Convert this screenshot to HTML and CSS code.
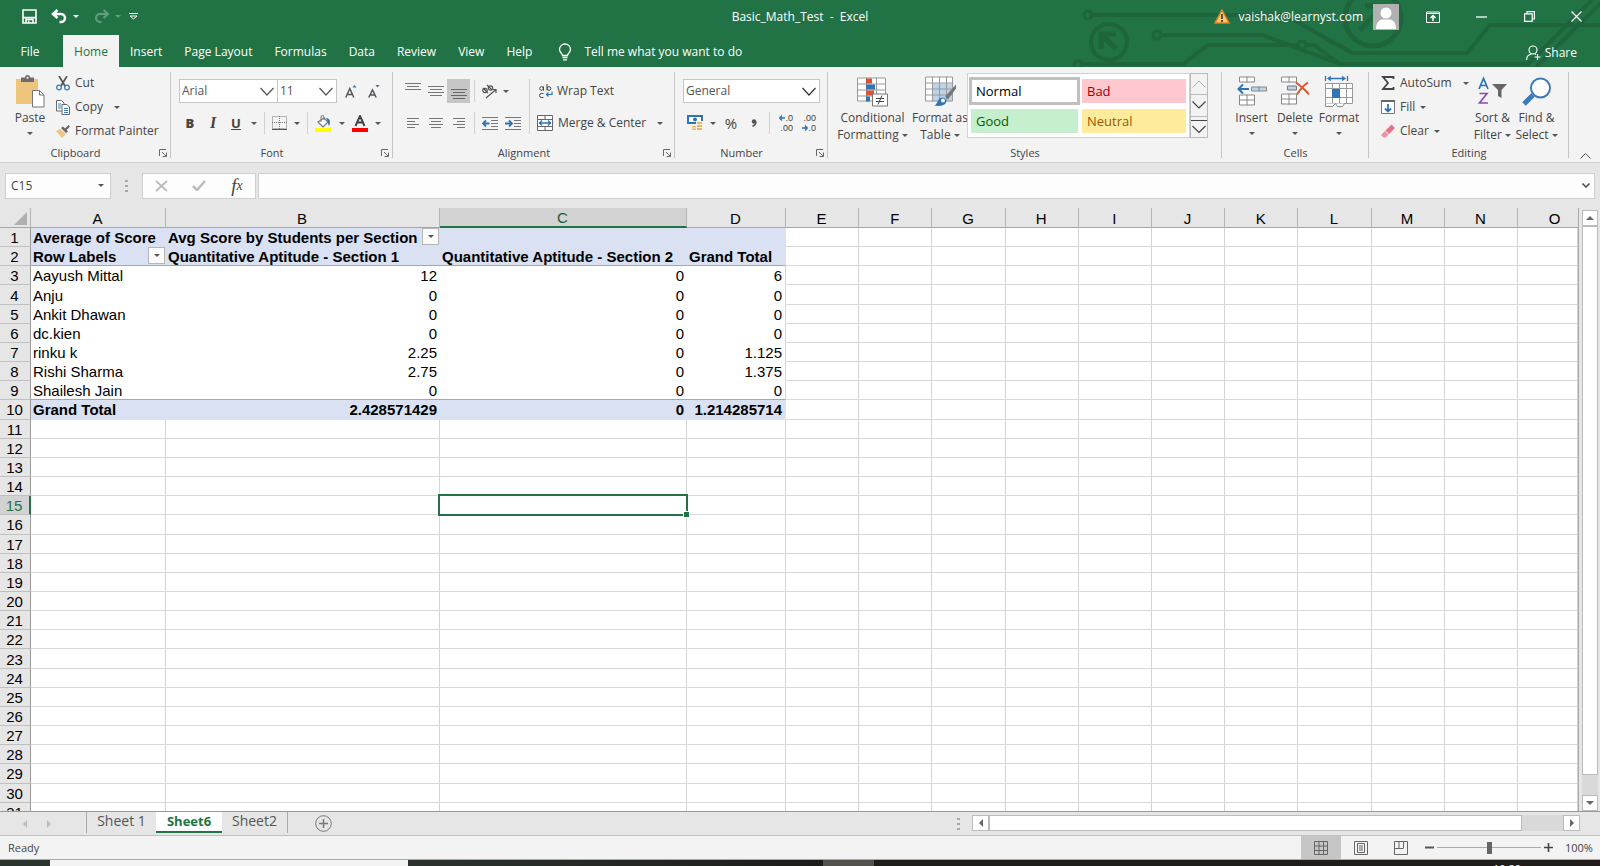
FILE: index.html
```html
<!DOCTYPE html>
<html lang="en">
<head>
<meta charset="utf-8">
<title>Basic_Math_Test - Excel</title>
<link rel="stylesheet" href="styles.css">
</head>
<body>
<header class="top">
  <svg class="circuit" width="530" height="67" viewBox="1070 0 530 67" fill="none" stroke="#1e643c" stroke-width="4" aria-hidden="true">
    <circle cx="1088" cy="15" r="4" stroke-width="3"/><path d="M1093 15H1285L1352 53H1467L1490 25H1600"/>
    <circle cx="1109" cy="42" r="18"/><path d="M1101 49V34H1116M1102 35L1116 49" stroke-width="5"/>
    <circle cx="1157" cy="35" r="4" stroke-width="3"/><path d="M1162 35H1262L1340 64H1528L1592 0"/>
    <circle cx="1078" cy="65" r="4" stroke-width="3"/><path d="M1083 64H1183L1208 45H1297M1307 45H1314L1340 64"/>
    <circle cx="1302" cy="45" r="4" stroke-width="3"/>
    <circle cx="1373" cy="18" r="28" stroke-width="5"/><path d="M1360 30L1382 8M1365 6H1384V24" stroke-width="5"/>
    <path d="M1536 67L1604 0"/>
  </svg>
  <div class="titlebar">
    <div class="qat">
      <button class="tb" aria-label="Save"><svg width="15" height="15" viewBox="0 0 15 15"><path d="M1 1h13v13H1z" fill="none" stroke="#fff" stroke-width="1.6"/><path d="M1 8.600h13M4 14v-3.500h7V14" fill="none" stroke="#fff" stroke-width="1.600"/><path d="M6 11.500h1.500V14H6z" fill="#fff"/></svg></button>
      <button class="tb undo" aria-label="Undo"><svg width="17" height="15" viewBox="0 0 17 15"><path d="M2 5h8a4 4 0 0 1 0 8H8.500M6.500 1L2 5l4.500 4" fill="none" stroke="#fff" stroke-width="2.500"/></svg><i class="caret"></i></button>
      <button class="tb redo" aria-label="Redo"><svg width="17" height="15" viewBox="0 0 17 15"><path d="M15 5H7a4 4 0 0 0 0 8h1.500M10.500 1L15 5l-4.500 4" fill="none" stroke="#fff" stroke-width="2"/></svg><i class="caret"></i></button>
      <button class="tb custom" aria-label="Customize toolbar"><svg width="9" height="7" viewBox="0 0 9 7"><path d="M0 .5h9M1 3h7L4.500 6z" fill="none" stroke="#fff"/></svg></button>
    </div>
    <div class="doc">Basic_Math_Test&nbsp; -&nbsp; Excel</div>
    <div class="account">
      <svg class="warn" width="16" height="15" viewBox="0 0 16 15"><path d="M8 1L15 14H1z" fill="#f9c877" stroke="#e0801c" stroke-width="1.500"/><path d="M8 5v5M8 11v2" stroke="#333" stroke-width="1.600"/></svg>
      <span class="mail">vaishak@learnyst.com</span>
      <svg class="avatar" width="26" height="26" viewBox="0 0 26 26"><path d="M0 0h26v26H0z" fill="#b1b1b1"/><circle cx="13" cy="9" r="5.500" fill="#fff"/><path d="M3 25c0-6 3-9.500 6-9.500h8c3 0 6 3.500 6 9.500z" fill="#fff"/></svg>
      <button class="win" aria-label="Ribbon display options"><svg width="14" height="12" viewBox="0 0 14 12" fill="none" stroke="#fff"><path d="M.5 1h13v10.500H.5zM.5 2.500h13"/><path d="M7 10V5M4.500 7L7 4.500 9.500 7" stroke-width="1.500"/></svg></button>
      <button class="win" aria-label="Minimize"><svg width="11" height="11" viewBox="0 0 11 11"><path d="M0 6h11" stroke="#fff" stroke-width="1.300"/></svg></button>
      <button class="win" aria-label="Restore"><svg width="11" height="11" viewBox="0 0 11 11" fill="none" stroke="#fff" stroke-width="1.200"><path d="M.6 2.800h7.600v7.600H.6zM3 2.500V.6h7.400V8H8.500"/></svg></button>
      <button class="win" aria-label="Close"><svg width="11" height="11" viewBox="0 0 11 11"><path d="M.5.5l10 10M10.500.5l-10 10" stroke="#fff" stroke-width="1.300"/></svg></button>
    </div>
  </div>
  <nav class="tabs">
    <button class="tab file">File</button><button class="tab active">Home</button><button class="tab">Insert</button><button class="tab">Page Layout</button><button class="tab">Formulas</button><button class="tab">Data</button><button class="tab">Review</button><button class="tab">View</button><button class="tab">Help</button>
    <button class="tell"><svg width="14" height="18" viewBox="0 0 14 18" fill="none" stroke="#fff" stroke-width="1.300"><path d="M4.500 12.500c0-2-3-3-3-6a5.500 5.500 0 0 1 11 0c0 3-3 4-3 6zM4.500 14.500h5M5 16.800h4"/></svg>Tell me what you want to do</button>
    <button class="share"><svg width="15" height="16" viewBox="0 0 15 16" fill="none" stroke="#fff" stroke-width="1.100"><circle cx="7" cy="5" r="4"/><path d="M.6 15c0-3 2-5.500 5-6M9 9l1 .5M11.500 9v6M8.500 12h6"/></svg>Share</button>
  </nav>
</header>

<section class="ribbon">
  <div class="group clipboard">
    <div class="body">
      <button class="big paste"><svg width="30" height="33" viewBox="0 0 30 33"><path d="M1 4h22v25H1z" fill="#edc57d"/><path d="M6 2.500h4a2.500 2.500 0 0 1 5 0h4V7H6z" fill="#6d6d6d"/><circle cx="12.500" cy="2.800" r="1" fill="#fff"/><path d="M17.500 15.500h7l4.500 4.500v12H17.500z" fill="#fff" stroke="#777"/><path d="M24.500 15.500V20H29" fill="none" stroke="#777"/></svg><span>Paste</span><i class="caret"></i></button>
      <div class="stack">
        <button class="sm"><svg width="14" height="15" viewBox="0 0 14 15" fill="none"><path d="M3 0l6 10M11 0L5 10" stroke="#555" stroke-width="1.700"/><circle cx="3" cy="11.500" r="2.300" stroke="#3d7ab8" stroke-width="1.300"/><circle cx="11" cy="11.500" r="2.300" stroke="#3d7ab8" stroke-width="1.300"/></svg>Cut</button>
        <button class="sm"><svg width="14" height="15" viewBox="0 0 14 15" fill="#fff" stroke="#666"><path d="M.5.5h5L8 3v8H.5z"/><path d="M6 4.500h5L13.500 7v7.500H6z"/><path d="M2 4h3M2 6h3M2 8h3M8 8.500h4M8 10.500h4M8 12.500h4" stroke="#3d7ab8"/></svg>Copy<i class="caret far"></i></button>
        <button class="sm"><svg width="14" height="13" viewBox="0 0 14 13"><path d="M0 6l4-2 6 5-4 4z" fill="#edc57d"/><path d="M5 3l5 5 2-1.500L10.500 5 14 1.500 12.500 0 9 3.500 7 1.500z" fill="#666"/></svg>Format Painter</button>
      </div>
    </div>
    <div class="label">Clipboard<svg class="launch" width="8" height="8" viewBox="0 0 8 8"><path d="M.5 7V.5H7M3 3l4 4M7.500 3.500v4h-4" fill="none" stroke="#666"/></svg></div>
  </div>

  <div class="group font">
    <div class="body rows">
      <div class="row">
        <div class="combo fname"><select aria-label="Font"><option>Arial</option></select><svg width="14" height="9" viewBox="0 0 14 9"><path d="M.5 1L7 8l6.500-7" fill="none" stroke="#555" stroke-width="1.200"/></svg></div>
        <div class="combo fsize"><select aria-label="Font size"><option>11</option></select><svg width="14" height="9" viewBox="0 0 14 9"><path d="M.5 1L7 8l6.500-7" fill="none" stroke="#555" stroke-width="1.200"/></svg></div>
        <button class="ic grow" aria-label="Increase font size"><svg width="12" height="13" viewBox="0 0 12 13"><path d="M.8 12.500L4.800 3.500l4 9M2.300 9.500h5" fill="none" stroke="#555" stroke-width="1.500"/><path d="M7.500 2.500h4L9.500 0z" fill="#2e75b6"/></svg></button>
        <button class="ic" aria-label="Decrease font size"><svg width="12" height="13" viewBox="0 0 12 13"><path d="M.8 12.500L4.500 5l3.700 7.500M2.300 10h4.500" fill="none" stroke="#555" stroke-width="1.500"/><path d="M7.500 0h4l-2 2.500z" fill="#2e75b6"/></svg></button>
      </div>
      <div class="row second">
        <button class="ic biu"><b>B</b></button><button class="ic biu it">I</button><button class="ic biu un">U</button><i class="caret"></i>
        <i class="sep"></i>
        <button class="ic" aria-label="Borders"><svg width="15" height="14" viewBox="0 0 15 14" fill="none" stroke="#777"><path d="M.5.5h14v12H.5zM7.500 0v13M0 6.500h15" stroke-dasharray="1 1"/><path d="M0 13.500h15" stroke="#555"/></svg></button><i class="caret"></i>
        <i class="sep"></i>
        <button class="ic" aria-label="Fill color"><svg width="17" height="17" viewBox="0 0 17 17"><path d="M3 7l6-4 4 4-5 5z" fill="#fff" stroke="#777" stroke-width="1.200"/><path d="M6 7V2a1.500 1.500 0 0 1 3 0v3" fill="none" stroke="#777"/><path d="M11 3c4 0 5 4 3 8-1-2-1-3-1-4z" fill="#2e75b6"/><path d="M0 13h16v4H0z" fill="#ff0"/></svg></button><i class="caret"></i>
        <button class="ic fc" aria-label="Font color"><svg width="16" height="17" viewBox="0 0 16 17"><path d="M3.500 11L8 1l4.500 10M5 7.500h6" fill="none" stroke="#444" stroke-width="2"/><path d="M0 13h16v4H0z" fill="red"/></svg></button><i class="caret"></i>
      </div>
    </div>
    <div class="label">Font<svg class="launch" width="8" height="8" viewBox="0 0 8 8"><path d="M.5 7V.5H7M3 3l4 4M7.500 3.500v4h-4" fill="none" stroke="#666"/></svg></div>
  </div>

  <div class="group align">
    <div class="body cols">
      <div class="rows">
        <div class="row">
          <button class="sq" aria-label="Top align"><svg width="16" height="16" viewBox="0 0 16 16"><path d="M0 .5h16M2 3.500h12M0 6.500h16" stroke="#777"/></svg></button>
          <button class="sq" aria-label="Middle align"><svg width="16" height="16" viewBox="0 0 16 16"><path d="M0 3.500h16M2 6.500h12M0 9.500h16M2 12.500h12" stroke="#777"/></svg></button>
          <button class="sq on" aria-label="Bottom align"><svg width="16" height="16" viewBox="0 0 16 16"><path d="M0 6.500h16M2 9.500h12M0 12.500h16M2 15.500h12" stroke="#666"/></svg></button>
          <i class="sep"></i>
          <button class="ic ori" aria-label="Orientation"><svg width="17" height="15" viewBox="0 0 17 15" fill="none" stroke="#555" stroke-width="1.200"><circle cx="4" cy="6.500" r="2.200"/><path d="M2 4l5 5M6 1l5 5"/><circle cx="9.500" cy="4" r="2.200"/><path d="M5 14L15 5.500M11.500 5.500H15V9"/></svg></button><i class="caret"></i>
        </div>
        <div class="row second">
          <button class="sq" aria-label="Align left"><svg width="12" height="10" viewBox="0 0 12 10"><path d="M0 .5h12M0 3.500h8M0 6.500h12M0 9.500h8" stroke="#777"/></svg></button>
          <button class="sq" aria-label="Center"><svg width="14" height="10" viewBox="0 0 14 10"><path d="M0 .5h14M2 3.500h10M0 6.500h14M2 9.500h10" stroke="#777"/></svg></button>
          <button class="sq" aria-label="Align right"><svg width="12" height="10" viewBox="0 0 12 10"><path d="M0 .5h12M4 3.500h8M0 6.500h12M4 9.500h8" stroke="#777"/></svg></button>
          <i class="sep"></i>
          <button class="sq" aria-label="Decrease indent"><svg width="16" height="13" viewBox="0 0 16 13"><path d="M0 .5h16M9 3.500h7M9 6.500h7M9 9.500h7M0 12.500h16" stroke="#777"/><path d="M7.500 6.500H1M4 3.500l-3 3 3 3" fill="none" stroke="#2e75b6" stroke-width="1.800"/></svg></button>
          <button class="sq" aria-label="Increase indent"><svg width="16" height="13" viewBox="0 0 16 13"><path d="M0 .5h16M9 3.500h7M9 6.500h7M9 9.500h7M0 12.500h16" stroke="#777"/><path d="M0 6.500h6.500M4 3.500l3 3-3 3" fill="none" stroke="#2e75b6" stroke-width="1.800"/></svg></button>
        </div>
      </div>
      <div class="rows wrapcol">
        <div class="row"><button class="sm wrap"><svg width="14" height="14" viewBox="0 0 14 14" fill="none" stroke="#444"><circle cx="2.500" cy="4.500" r="1.800"/><path d="M4.500 2.500v4M8 0v6.500"/><circle cx="10" cy="4.500" r="1.800"/><path d="M4.500 9.500H2.500a1.500 1.500 0 0 0 0 4h2"/><path d="M13 7.500v3H7.500M9.500 8.500l-2 2 2 2" stroke="#2e75b6" stroke-width="1.200"/></svg>Wrap Text</button></div>
        <div class="row second"><button class="sm"><svg width="16" height="16" viewBox="0 0 16 16"><path d="M.5.500h15v15H.5zM0 4.500h16M0 11.500h16M8 0v4.500M8 11.500V16" fill="#fff" stroke="#666"/><path d="M2 8h12M5 5.500L2.500 8 5 10.500M11 5.500L13.500 8 11 10.500" fill="none" stroke="#2e75b6" stroke-width="1.300"/></svg>Merge &amp; Center<i class="caret far"></i></button></div>
      </div>
    </div>
    <div class="label">Alignment<svg class="launch" width="8" height="8" viewBox="0 0 8 8"><path d="M.5 7V.5H7M3 3l4 4M7.500 3.500v4h-4" fill="none" stroke="#666"/></svg></div>
  </div>

  <div class="group number">
    <div class="body rows">
      <div class="row"><div class="combo nfmt"><select aria-label="Number format"><option>General</option></select><svg width="14" height="9" viewBox="0 0 14 9"><path d="M.5 1L7 8l6.500-7" fill="none" stroke="#333" stroke-width="1.200"/></svg></div></div>
      <div class="row second">
        <button class="ic cur" aria-label="Accounting format"><svg width="16" height="16" viewBox="0 0 16 16"><path d="M0 0h16v9H0z" fill="#2e75b6"/><path d="M2 2h12v5H2z" fill="#fff"/><circle cx="8" cy="4.500" r="2" fill="#2e75b6"/><path d="M9 6h7v9H5V10h4z" fill="#f3f3f3"/><path d="M10 7h5v2h-5zM10 10h5v2h-5zM10 13h5v2h-5zM5 11h4v1.500H5zM5 13.500h4V15H5z" fill="#edb55c"/></svg></button><i class="caret"></i>
        <button class="ic pct">%</button>
        <button class="ic comma" aria-label="Comma style"><svg width="6" height="8" viewBox="0 0 6 8"><circle cx="3" cy="2.500" r="2.200" fill="#555"/><path d="M5 2.500c0 2.500-1.500 4-3.500 5" fill="none" stroke="#555" stroke-width="1.500"/></svg></button>
        <i class="sep"></i>
        <button class="dec" aria-label="Increase decimal"><span><svg width="6" height="6" viewBox="0 0 6 6"><path d="M6 3H1M3 .5L.8 3 3 5.500" fill="none" stroke="#2e75b6" stroke-width="1.400"/></svg>.0</span><span>.00</span></button>
        <button class="dec" aria-label="Decrease decimal"><span>.00</span><span><svg width="6" height="6" viewBox="0 0 6 6"><path d="M0 3h5M3 .5L5.200 3 3 5.500" fill="none" stroke="#2e75b6" stroke-width="1.400"/></svg>.0</span></button>
      </div>
    </div>
    <div class="label">Number<svg class="launch" width="8" height="8" viewBox="0 0 8 8"><path d="M.5 7V.5H7M3 3l4 4M7.500 3.500v4h-4" fill="none" stroke="#666"/></svg></div>
  </div>

  <div class="group styles">
    <div class="body">
      <button class="big cond"><svg width="31" height="30" viewBox="0 0 31 30"><path d="M.5 1.500h28v23H.5zM9.500 1v24M19.500 1v24M0 7.500h29M0 13.500h29M0 19.500h29" fill="#fff" stroke="#999"/><path d="M9 2h6v5H9zM9 14h8v5H9z" fill="#d9532c"/><path d="M9 8h9v5H9zM9 20h4v5H9z" fill="#2e75b6"/><path d="M15.500 17.500h15v12h-15z" fill="#fff" stroke="#777"/><path d="M19 22h8M19 25h8M25 19l-4 9" stroke="#444"/></svg><span>Conditional<br>Formatting <i class="caret"></i></span></button>
      <button class="big fat"><svg width="31" height="30" viewBox="0 0 31 30"><path d="M.5.500h27v24H.5z" fill="#fff"/><path d="M7 7h20v18H7z" fill="#bdd3ea"/><path d="M.5.500h27v24H.5zM7.500 0v25M14.500 0v25M21.500 0v25M0 6.500h28M0 12.500h28M0 18.500h28" fill="none" stroke="#999"/><path d="M31 8v4l-8 11-3-3z" fill="#777"/><path d="M9 29c4-1 3-7 8-8 3 0 5 2 4 5s-6 4-12 3z" fill="#2e75b6"/><circle cx="18" cy="24" r="2" fill="#fff"/></svg><span>Format as<br>Table <i class="caret"></i></span></button>
      <div class="gallery">
        <div class="swatches"><button class="st normal">Normal</button><button class="st bad">Bad</button><button class="st good">Good</button><button class="st neutral">Neutral</button></div>
        <div class="gscroll">
          <button aria-label="Previous styles"><svg width="14" height="8" viewBox="0 0 14 8"><path d="M.5 7.500L7 1l6.500 6.500" fill="none" stroke="#b0b0b0"/></svg></button>
          <button aria-label="Next styles"><svg width="14" height="8" viewBox="0 0 14 8"><path d="M.5.500L7 7l6.500-6.500" fill="none" stroke="#444" stroke-width="1.200"/></svg></button>
          <button aria-label="More styles"><svg width="16" height="14" viewBox="0 0 16 14"><path d="M0 .5h16M1.500 6L8 12.500 14.500 6" fill="none" stroke="#444" stroke-width="1.200"/></svg></button>
        </div>
      </div>
    </div>
    <div class="label">Styles</div>
  </div>

  <div class="group cells">
    <div class="body">
      <button class="big"><svg width="30" height="30" viewBox="0 0 30 30"><path d="M2.500.500h15v5h-15zM10 0v6M2.500 18.500h15v10h-15zM10 18v11M2 23.500h16" fill="#fff" stroke="#888"/><path d="M14.500 10.500h15v4h-15zM22 10v5" fill="#bdd3ea" stroke="#888"/><path d="M12 12.500H2M6 8l-4.500 4.500L6 17" fill="none" stroke="#2e75b6" stroke-width="2"/></svg><span>Insert</span><i class="caret"></i></button>
      <button class="big"><svg width="30" height="30" viewBox="0 0 30 30"><path d="M1.500.500h15v5h-15zM9 0v6M1.500 17.500h15v10h-15zM9 17v11M1 22.500h16" fill="#fff" stroke="#888"/><path d="M7.500 9.500h9v4h-9z" fill="#bdd3ea" stroke="#777"/><path d="M16 6c4 3 9 7 13 12M28 6c-5 3-8 7-11 12" fill="none" stroke="#d9532c" stroke-width="2"/></svg><span>Delete</span><i class="caret"></i></button>
      <button class="big"><svg width="30" height="31" viewBox="0 0 30 31"><path d="M1.500 0v5M23.500 0v5M4 2.500h17M7 .5l-3 2 3 2M18 .5l3 2-3 2" fill="none" stroke="#2e75b6" stroke-width="1.300"/><path d="M1.500 7.500h27v20h-27zM8.500 7v20M15.500 7v20M22.500 7v20M1 12.500h28M1 21.500h28" fill="#fff" stroke="#999"/><path d="M8 13h8v9H8z" fill="#2e75b6"/><path d="M1.500 27.500v3h7l3-3 2 3h5l2-3" fill="#fff" stroke="#888"/></svg><span>Format</span><i class="caret"></i></button>
    </div>
    <div class="label">Cells</div>
  </div>

  <div class="group editing">
    <div class="body">
      <div class="stack">
        <button class="sm"><svg width="14" height="14" viewBox="0 0 14 14"><path d="M12.500 3V1H2l5 6-5 6h10.500v-2" fill="none" stroke="#444" stroke-width="1.800"/></svg>AutoSum<i class="caret far"></i></button>
        <button class="sm"><svg width="14" height="14" viewBox="0 0 14 14"><path d="M.5.500h13v13H.5z" fill="#fff" stroke="#777"/><path d="M0 1h14" stroke="#666" stroke-width="2"/><path d="M7 4v8M4 8.500l3 3 3-3" fill="none" stroke="#2e75b6" stroke-width="1.800"/></svg>Fill<i class="caret"></i></button>
        <button class="sm"><svg width="14" height="14" viewBox="0 0 14 14"><path d="M4.500 6.500L10.500.5l3.500 3.500-6 6z" fill="#e8708a"/><path d="M4 7l3.500 3.500-3 3h-2L.5 11.500v-1z" fill="#ee90a4"/></svg>Clear<i class="caret"></i></button>
      </div>
      <button class="big sort"><svg width="29" height="29" viewBox="0 0 29 29" fill="none"><path d="M1 12L5.500 1.500 10 12M2.500 8.500h6" stroke="#2e75b6" stroke-width="1.700"/><path d="M1.500 16.500H9L1.500 26H10" stroke="#8a4bb0" stroke-width="1.600"/><path d="M14 7h15l-5.500 6v8l-3.500-2v-6z" fill="#666"/></svg><span>Sort &amp;<br>Filter <i class="caret"></i></span></button>
      <button class="big"><svg width="30" height="29" viewBox="0 0 30 29"><path d="M11 18l-9 9" stroke="#3d7ab8" stroke-width="5"/><circle cx="18.500" cy="11" r="9.500" fill="#fff" stroke="#3d7ab8" stroke-width="2"/></svg><span>Find &amp;<br>Select <i class="caret"></i></span></button>
    </div>
    <div class="label">Editing</div>
  </div>
  <button class="collapse" aria-label="Collapse ribbon"><svg width="11" height="6" viewBox="0 0 11 6"><path d="M.5 5.500l5-5 5 5" fill="none" stroke="#555"/></svg></button>
</section>

<section class="fbar">
  <div class="namebox"><input aria-label="Name box" value="C15"><i class="caret"></i></div>
  <svg class="grip" width="3" height="12" viewBox="0 0 3 12"><path d="M0 0h3v2H0zM0 5h3v2H0zM0 10h3v2H0z" fill="#a9a9a9"/></svg>
  <div class="fx">
    <button aria-label="Cancel"><svg width="13" height="12" viewBox="0 0 13 12"><path d="M1 1l11 10M12 1L1 11" stroke="#bbb" stroke-width="1.800"/></svg></button>
    <button aria-label="Enter"><svg width="14" height="11" viewBox="0 0 14 11"><path d="M1 6l4 4 8-9" fill="none" stroke="#bbb" stroke-width="2.500"/></svg></button>
    <button class="fn">f<small>x</small></button>
  </div>
  <div class="formula"><input aria-label="Formula bar"><svg width="8" height="5" viewBox="0 0 8 5"><path d="M.5.500L4 4 7.500.500" fill="none" stroke="#555" stroke-width="1.600"/></svg></div>
</section>

<main class="sheet">
  <div class="gridwrap">
    <table class="grid">
      <colgroup><col class="c-h"><col class="c-a"><col class="c-b"><col class="c-c"><col class="c-d"><col span="10"><col class="c-o"></colgroup>
      <thead><tr id="heads"></tr></thead>
      <tbody id="rows"></tbody>
    </table>
  </div>
  <div class="vscroll"><button aria-label="Scroll up"><i class="tri up"></i></button><div class="vthumb"></div><div class="vtrack"></div><button aria-label="Scroll down"><i class="tri down"></i></button></div>
</main>

<footer>
  <div class="sheetbar">
    <div class="navs"><i class="tri left dim"></i><i class="tri right dim"></i></div>
    <button class="sh first">Sheet 1</button><button class="sh cur-sheet">Sheet6</button><button class="sh last">Sheet2</button>
    <button class="add" aria-label="New sheet"><svg width="17" height="17" viewBox="0 0 17 17"><path d="M8.500 4v9M4 8.500h9" stroke="#777" stroke-width="1.500"/><circle cx="8.500" cy="8.500" r="7.800" fill="none" stroke="#777"/></svg></button>
    <svg class="grip hgrip" width="3" height="12" viewBox="0 0 3 12"><path d="M0 0h3v2H0zM0 5h3v2H0zM0 10h3v2H0z" fill="#a9a9a9"/></svg>
    <div class="hscroll"><button aria-label="Scroll left"><i class="tri left"></i></button><div class="hthumb"></div><div class="htrack"></div><button aria-label="Scroll right"><i class="tri right"></i></button></div>
  </div>
  <div class="status">
    <span class="ready">Ready</span>
    <button class="vw on" aria-label="Normal view"><svg width="14" height="14" viewBox="0 0 14 14"><path d="M.5.500h13v13H.5zM5 0v14M9.500 0v14M0 5h14M0 9.500h14" fill="none" stroke="#666"/></svg></button>
    <button class="vw" aria-label="Page layout view"><svg width="14" height="14" viewBox="0 0 14 14" fill="none" stroke="#666"><path d="M.5.500h13v13H.5zM3.500 2.500h7v9h-7zM5 5h4M5 7h4M5 9h4"/></svg></button>
    <button class="vw" aria-label="Page break view"><svg width="14" height="14" viewBox="0 0 14 14" fill="none" stroke="#666"><path d="M.5.500h13v13H.5zM5 0v7M9.500 0v7M0 7.500h9.500"/></svg></button>
    <button class="zb" aria-label="Zoom out"><svg width="9" height="9" viewBox="0 0 9 9"><path d="M0 4.500h9" stroke="#555" stroke-width="2"/></svg></button>
    <input class="zoom" type="range" min="0" max="100" value="50" aria-label="Zoom">
    <button class="zb" aria-label="Zoom in"><svg width="9" height="9" viewBox="0 0 9 9"><path d="M0 4.500h9M4.500 0v9" stroke="#444" stroke-width="1.600"/></svg></button>
    <span class="pc">100%</span>
  </div>
  <div class="taskbar"><div class="start"></div><div class="search"></div><div class="mid"></div><div class="app"></div><div class="tray">10:20</div></div>
</footer>
<script src="app.js"></script>
</body>
</html>
```

FILE: styles.css
```css
* { box-sizing: border-box; }
body { margin: 0; height: 100vh; display: flex; flex-direction: column; overflow: hidden; background: #e6e6e6; color: #444; font: 12px/16px "Open Sans", "Noto Sans", sans-serif; }
button, input, select { font: inherit; color: inherit; border: 0; background: none; padding: 0; margin: 0; outline: 0; }
button { display: flex; align-items: center; justify-content: center; white-space: nowrap; }
svg { display: block; flex: none; }
.caret { display: inline-block; flex: none; width: 0; height: 0; border: 3px solid transparent; border-top-color: #555; border-bottom: 0; vertical-align: middle; }

.top { position: relative; background: #217346; color: #fff; }
.circuit { position: absolute; right: 0; top: 0; }
.titlebar { position: relative; display: grid; grid-template-columns: 1fr auto 1fr; height: 35px; padding-bottom: 2px; align-items: center; }
.qat { display: flex; align-items: center; padding-left: 22px; gap: 14px; }
.custom { margin-left: -6px; }
.tb { gap: 5px; }
.tb .caret { border-top-color: #fff; }
.redo { opacity: .3; }
.account { display: flex; align-items: center; justify-content: flex-end; }
.mail { margin: 0 10px 0 9px; }
.avatar { margin-right: 10px; }
.win { width: 48px; height: 32px; }
.win:last-child { width: 47px; }
.tabs { position: relative; display: flex; height: 32px; }
.tab, .tell { padding: 1px 11px 0; color: #fff; }
.file { width: 63px; padding: 1px 3px 0 0; }
.tab.active { width: 56px; padding: 1px 0 0; background: #f3f3f3; color: #217346; }
.tell { margin-left: 15px; padding: 1px 0 0; gap: 12px; }
.share { margin: 4px 23px 0 auto; gap: 4px; }

.ribbon { display: flex; height: 96px; background: #f3f3f3; border-bottom: 1px solid #d2d2d2; }
.group { position: relative; display: flex; flex-direction: column; padding-top: 4px; }
.group::after { content: ""; position: absolute; right: 0; top: 5px; bottom: 4px; width: 1px; background: #c4c4c4; }
.clipboard { width: 171px; }
.font { width: 222px; }
.align { width: 282px; }
.number { width: 153px; }
.styles { width: 394px; }
.cells { width: 147px; }
.editing { width: 200px; }
.body { display: flex; height: 75px; }
.label { position: relative; text-align: center; font-size: 11px; line-height: 18px; padding-right: 20px; }
.launch { position: absolute; right: 4px; top: 5px; }
.styles .label, .cells .label, .editing .label { padding-right: 0; }
.big { flex-direction: column; justify-content: flex-start; line-height: 17px; padding-top: 4px; text-align: center; }
.big svg { height: 33px; margin-bottom: 1px; }
.big > .caret { margin-top: 6px; }
.stack { display: flex; flex-direction: column; }
.sm { height: 24px; justify-content: flex-start; gap: 5px; }
.caret.far { margin-left: 6px; }
.paste { margin: 0 8px 0 12px; width: 36px; }
.rows { display: flex; flex-direction: column; gap: 8px; padding-top: 8px; }
.row { display: flex; align-items: center; height: 24px; }
.sep { width: 1px; height: 22px; background: #d0d0d0; }
.combo { position: relative; height: 24px; background: #fff; border: 1px solid #c6c6c6; }
.combo select { width: 100%; height: 22px; padding: 0 2px; appearance: none; color: #555; }
.combo svg { position: absolute; right: 3px; top: 7px; pointer-events: none; }
.fname { width: 99px; }
.fsize { width: 60px; margin-left: -1px; }
.grow { margin: 0 11px 0 8px; }
.font .body { padding-left: 4px; }
.font .row { padding-left: 4px; }
.font .second { gap: 7px; padding-left: 7px; }
.biu { width: 16px; font-size: 13px; font-weight: 700; }
.it { font-family: "Liberation Serif", serif; font-style: italic; font-size: 16px; }
.un { text-decoration: underline; }
.sq { width: 23px; height: 24px; }
.sq.on { background: #c6c6c6; }
.align .body { padding-left: 8px; }
.align .sep { margin: 0 3px 0 4px; }
.ori { margin: 0 5px 0 3px; }
.wrapcol { margin-left: 5px; padding-left: 8px; position: relative; }
.wrapcol::before { content: ""; position: absolute; left: 0; top: 8px; bottom: 10px; width: 1px; background: #d0d0d0; }
.wrap { gap: 4px; padding-left: 2px; }
.number .body { padding-left: 8px; }
.nfmt { width: 137px; }
.cur { margin: 0 7px 0 4px; }
.pct { width: 30px; font-size: 15px; }
.comma { width: 16px; }
.number .sep { margin: 0 9px 0 7px; }
.dec { flex-direction: column; align-items: flex-end; font: 9px/10px "Liberation Sans", Arial, sans-serif; width: 14px; margin-right: 9px; }
.dec span { display: flex; align-items: center; }
.cond { width: 81px; margin-left: 4px; }
.fat { width: 54px; }
.gallery { display: flex; align-items: flex-start; padding-top: 2px; }
.swatches { display: grid; grid-template-columns: 107px 104px; gap: 6px 4px; width: 223px; height: 65px; padding: 5px 3px; background: #fff; border: 1px solid #d2d2d2; }
.st { height: 24px; justify-content: flex-start; padding-left: 5px; font-size: 13px; }
.normal { color: #000; outline: 3px solid #c0c0c0; outline-offset: -1px; }
.bad { background: #ffc7ce; color: #9c0006; }
.good { background: #c6efce; color: #006100; }
.neutral { background: #ffeb9c; color: #9c5700; }
.gscroll { width: 18px; height: 65px; display: flex; flex-direction: column; border: 1px solid #bbb; }
.gscroll button { flex: 1; border-bottom: 1px solid #bbb; }
.gscroll button:last-child { border-bottom: 0; }
.cells .body { padding-left: 8px; }
.cells .big { width: 43px; }
.cells .big + .big { width: 44px; }
.editing .body { padding-left: 12px; }
.editing .stack { width: 90px; }
.sort { width: 43px; }
.editing .big:last-child { width: 45px; }
.collapse { margin: auto 0 3px auto; padding-right: 9px; }

.fbar { display: flex; align-items: center; height: 45px; padding: 0 5px 0 5px; }
.namebox, .fx, .formula { display: flex; align-items: center; height: 26px; background: #fdfdfd; border: 1px solid #cfcfcf; }
.namebox { width: 106px; padding: 0 6px 0 5px; }
.namebox input { flex: 1; min-width: 0; }
.grip { margin: 0 14px; }
.fx { width: 114px; padding-left: 11px; margin-right: 2px; }
.fx button { width: 14px; margin-right: 24px; }
.fx .fn { margin: 0; font: italic 400 19px/20px "Liberation Serif", serif; color: #444; }
.fn small { font-size: 14px; }
.formula { flex: 1; padding-right: 4px; }
.formula input { flex: 1; }

.sheet { flex: 1; min-height: 0; display: flex; border-bottom: 1px solid #999; }
.gridwrap { flex: 1; min-width: 0; overflow: hidden; border-right: 1px solid #aaa; }
.grid { table-layout: fixed; width: 100%; height: calc(100% + 11px); border-collapse: separate; border-spacing: 0; font: 15px/18px "Liberation Sans", Arial, sans-serif; color: #000; }
.c-h { width: 31px; }
.c-a { width: 135px; }
.c-b { width: 274px; }
.c-c { width: 247px; }
.c-d { width: 99px; }
.c-o { width: 60px; }
.grid th, .grid td { padding: 1px 3px 0 2px; line-height: 17px; white-space: nowrap; height: 19px; }
.grid th { font-weight: 400; background: #e6e6e6; text-align: center; }
.grid thead th { border-right: 1px solid #b5b5b5; border-bottom: 1px solid #a6a6a6; }
.grid thead th:last-child { border-right: 0; padding-left: 16px; }
.grid tbody th { border-right: 1px solid #999; border-bottom: 1px solid #c0c0c0; }
.grid thead .sel { background: #d2d2d2; color: #185c37; border-bottom: 2px solid #217346; }
.grid tbody .sel { background: #d2d2d2; color: #217346; border-right: 2px solid #217346; }
.corner svg { margin-left: auto; }
.grid td { position: relative; background: #fff; border-right: 1px solid #d4d4d4; border-bottom: 1px solid #d9d9d9; }
.grid .pv { border-color: #fff; border-right: 0; }
.grid .pv.d { border-right: 1px solid #d4d4d4; }
.grid .band, .grid .band.d { background: #d9e1f2; border-color: #d9e1f2; font-weight: 700; }
.grid .rule { border-bottom-color: #8ea9db; }
.grid .band.rule { border-bottom-color: #8ea9db; }
.grid .num { text-align: right; }
.filter { position: absolute; right: 1px; bottom: 1px; width: 17px; height: 17px; background: #fbfbfb; border: 1px solid #b5b5b5; }
.grid .cursor { z-index: 1; }
.cursor::after { content: ""; position: absolute; inset: -2px; border: 2px solid #217346; }
.cursor::before { content: ""; position: absolute; z-index: 1; right: -3px; bottom: -3px; width: 5px; height: 5px; background: #217346; outline: 1px solid #fff; }
.vscroll { width: 21px; padding: 2px 2px 0 3px; display: flex; flex-direction: column; }
.vscroll button { height: 16px; background: #fff; border: 1px solid #bbb; }
.vthumb { flex: 1; background: #fff; border: 1px solid #bbb; }
.vtrack { height: 20px; background: #d9d9d9; }
.tri { width: 0; height: 0; border: 4px solid transparent; }
.up { border-bottom-color: #666; border-top: 0; }
.down { border-top-color: #666; border-bottom: 0; }
.left { border-right-color: #666; border-left: 0; }
.right { border-left-color: #666; border-right: 0; }
.left.dim { border-right-color: #bbb; }
.right.dim { border-left-color: #bbb; }

.sheetbar { display: flex; height: 24px; border-bottom: 1px solid #c0c0c0; font-size: 14px; color: #555; }
.navs { width: 86px; padding-left: 23px; display: flex; align-items: center; gap: 20px; }
.sh { width: 66px; height: 21px; padding-bottom: 4px; }
.first { width: 70px; border-left: 1px solid #aaa; }
.cur-sheet { background: #fff; color: #217346; font-size: 13px; font-weight: 700; border-bottom: 2px solid #217346; padding-bottom: 2px; }
.last { border-right: 1px solid #aaa; }
.add { margin-left: 27px; }
.hgrip { margin: auto 12px auto auto; }
.hscroll { display: flex; width: 608px; height: 16px; margin: 3px 20px 0 0; }
.hscroll button { width: 17px; background: #fff; border: 1px solid #bbb; }
.hthumb { flex: 1; background: #fff; border: 1px solid #bbb; }
.htrack { width: 41px; background: #d9d9d9; }
.status { display: flex; align-items: center; height: 24px; background: #f3f3f3; border-bottom: 1px solid #aaa; font-size: 11px; }
.ready { flex: 1; padding-left: 8px; }
.vw { width: 40px; height: 23px; }
.vw.on { background: #c6c6c6; }
.zb { margin: 0 3px; }
.vw + .zb { margin-left: 4px; }
.zoom { appearance: none; width: 104px; height: 12px; background: linear-gradient(#aaa, #aaa) center / 100% 1px no-repeat; }
.zoom::-webkit-slider-thumb { appearance: none; width: 5px; height: 12px; background: #666; }
.pc { width: 44px; padding-left: 9px; }
.taskbar { display: flex; height: 6px; background: #1f1c19; overflow: hidden; }
.start { width: 50px; background: #2b332d; }
.search { width: 358px; background: #f3f3f3; }
.mid { width: 415px; background: linear-gradient(90deg, #2b332d, #1c1c1a); }
.app { width: 51px; background: #55524e; }
.tray { margin: 1px 79px 0 auto; color: #fff; font-size: 11px; }
```

FILE: app.js
```js
const COLS = "ABCDEFGHIJKLMNO".split("");
const ROW_COUNT = 31;
const cells = {
  1: ["Average of Score", "Avg Score by Students per Section", "", ""],
  2: ["Row Labels", "Quantitative Aptitude - Section 1", "Quantitative Aptitude - Section 2", "Grand Total"],
  3: ["Aayush Mittal", 12, 0, 6],
  4: ["Anju", 0, 0, 0],
  5: ["Ankit Dhawan", 0, 0, 0],
  6: ["dc.kien", 0, 0, 0],
  7: ["rinku k", 2.25, 0, 1.125],
  8: ["Rishi Sharma", 2.75, 0, 1.375],
  9: ["Shailesh Jain", 0, 0, 0],
  10: ["Grand Total", 2.428571429, 0, 1.214285714]
};
const filters = ["B1", "A2"];
const active = { col: "C", row: 15 };

document.getElementById("heads").innerHTML =
  '<th class="corner"><svg width="13" height="13" viewBox="0 0 13 13"><path d="M13 0v13H0z" fill="#b0b0b0"/></svg></th>' +
  COLS.map(c => `<th scope="col"${c === active.col ? ' class="sel"' : ""}>${c}</th>`).join("");

let html = "";
for (let r = 1; r <= ROW_COUNT; r++) {
  html += `<tr><th scope="row"${r === active.row ? ' class="sel"' : ""}>${r}</th>`;
  COLS.forEach((c, i) => {
    const value = cells[r] && i < 4 ? cells[r][i] : "";
    const cls = [];
    if (r <= 10 && i < 4) {
      cls.push("pv");
      if (r <= 2 || r === 10) cls.push("band");
      if (r === 2 || r === 9) cls.push("rule");
      if (c === "D") cls.push("d");
      if (typeof value === "number") cls.push("num");
    }
    if (c === active.col && r === active.row) cls.push("cursor");
    const filter = filters.includes(c + r)
      ? '<button class="filter" aria-label="Filter"><i class="caret"></i></button>' : "";
    html += `<td class="${cls.join(" ")}">${value}${filter}</td>`;
  });
  html += "</tr>";
}
document.getElementById("rows").innerHTML = html;
```
